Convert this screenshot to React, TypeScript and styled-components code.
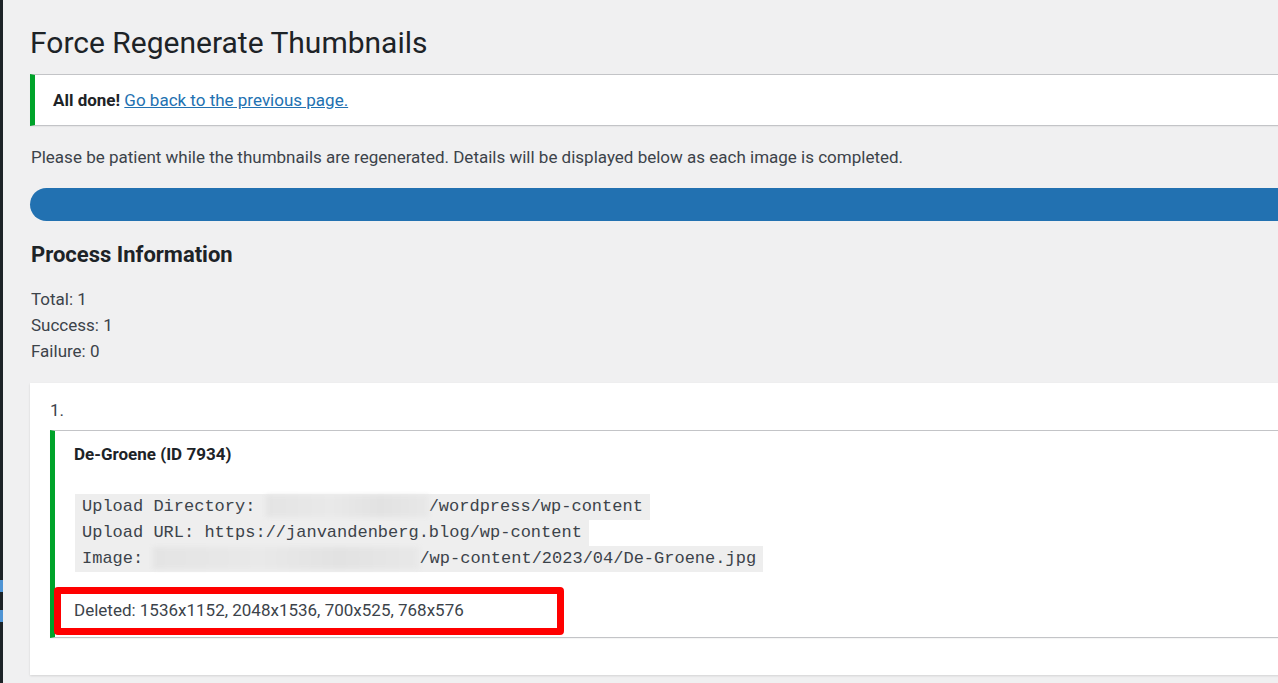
import styled, { createGlobalStyle } from 'styled-components'

const GlobalStyle = createGlobalStyle`
  html, body {
    margin: 0;
    padding: 0;
    background: #f0f0f1;
    overflow: hidden;
  }
  body {
    font-family: Roboto, "Liberation Sans", Arial, sans-serif;
    color: #3c434a;
    font-size: 17px;
    line-height: 26px;
  }
  * {
    box-sizing: border-box;
  }
`

const Page = styled.div`
  display: flex;
  min-height: 100vh;
  width: 100vw;
  overflow: hidden;
`

const AdminEdge = styled.div`
  flex: 0 0 3px;
  background: #1d2327;
  display: flex;
  flex-direction: column;
  padding-top: 580px;
  gap: 18px;
`

const EdgeMark = styled.div`
  height: 12px;
  background: #4f94d4;
`

const Wrap = styled.div`
  flex: 1;
  padding-left: 27px;
  margin-right: -60px;
  min-width: 0;
`

const Title = styled.h1`
  margin: 0 0 12px;
  padding-top: 23px;
  font-size: 30px;
  line-height: 39px;
  font-weight: 400;
  color: #1d2327;
`

const Notice = styled.div`
  background: #fff;
  border: 1px solid #c3c4c7;
  border-left: 5px solid #00a32a;
  box-shadow: 0 1px 1px rgba(0, 0, 0, 0.04);
`

const TopNotice = styled(Notice)`
  padding: 12px 18px;
  color: #3c434a;
`

const Strong = styled.strong`
  color: #1d2327;
  font-weight: 700;
`

const Link = styled.a`
  color: #2271b1;
  text-decoration: underline;
  cursor: pointer;
`

const Intro = styled.p`
  margin: 18px 0 0;
  padding-left: 1px;
`

const Progress = styled.div`
  margin-top: 18px;
  height: 33px;
  background: #2271b1;
  border-radius: 17px 0 0 17px;
`

const SectionTitle = styled.h2`
  margin: 19px 0 0;
  font-size: 22px;
  line-height: 29px;
  font-weight: 700;
  color: #1d2327;
  padding-left: 1px;
`

const Stats = styled.div`
  margin-top: 17px;
  padding-left: 1px;
  display: flex;
  flex-direction: column;
`

const Panel = styled.div`
  margin-top: 19px;
  background: #fff;
  padding: 14px 0 37px 20px;
  box-shadow: 0 1px 2px rgba(0, 0, 0, 0.12);
`

const ItemNumber = styled.div`
  margin-bottom: 7px;
`

const ItemNotice = styled(Notice)`
  padding: 10px 19px 14px;
`

const ItemTitle = styled.div`
  font-weight: 700;
  color: #1d2327;
`

const CodeBlock = styled.div`
  margin-top: 27px;
  display: flex;
  flex-direction: column;
  align-items: flex-start;
`

const CodeLine = styled.code`
  display: inline-block;
  font-family: "Liberation Mono", "Courier New", monospace;
  font-size: 17px;
  line-height: 26px;
  height: 26px;
  padding: 0 7px;
  margin-left: 1px;
  background: #eeeeee;
  color: #3c434a;
  white-space: pre;
`

const Blurred = styled.span<{ $w: number }>`
  display: inline-block;
  vertical-align: top;
  width: ${p => p.$w}px;
  height: 22px;
  margin-top: 1px;
  background: linear-gradient(90deg, #e4e4e4, #e9e9e9 40%, #e2e2e2 70%, #e8e8e8);
  filter: blur(2px);
`

const Deleted = styled.div`
  position: relative;
  margin-top: 25px;
`

const Highlight = styled.div`
  position: absolute;
  left: -20px;
  top: -10px;
  width: 510px;
  height: 48px;
  border: 7px solid #ff0000;
  border-radius: 4px;
  pointer-events: none;
`

export default function App() {
  return (
    <>
      <GlobalStyle />
      <Page>
        <AdminEdge>
          <EdgeMark />
          <EdgeMark />
        </AdminEdge>
        <Wrap>
          <Title>Force Regenerate Thumbnails</Title>
          <TopNotice>
            <Strong>All done!</Strong> <Link>Go back to the previous page.</Link>
          </TopNotice>
          <Intro>
            Please be patient while the thumbnails are regenerated. Details will be displayed below as each image is completed.
          </Intro>
          <Progress />
          <SectionTitle>Process Information</SectionTitle>
          <Stats>
            <span>Total: 1</span>
            <span>Success: 1</span>
            <span>Failure: 0</span>
          </Stats>
          <Panel>
            <ItemNumber>1.</ItemNumber>
            <ItemNotice>
              <ItemTitle>De-Groene (ID 7934)</ItemTitle>
              <CodeBlock>
                <CodeLine>Upload Directory: <Blurred $w={163} />/wordpress/wp-content</CodeLine>
                <CodeLine>Upload URL: https://janvandenberg.blog/wp-content</CodeLine>
                <CodeLine>Image: <Blurred $w={266} />/wp-content/2023/04/De-Groene.jpg</CodeLine>
              </CodeBlock>
              <Deleted>
                Deleted: 1536x1152, 2048x1536, 700x525, 768x576
                <Highlight />
              </Deleted>
            </ItemNotice>
          </Panel>
        </Wrap>
      </Page>
    </>
  )
}
